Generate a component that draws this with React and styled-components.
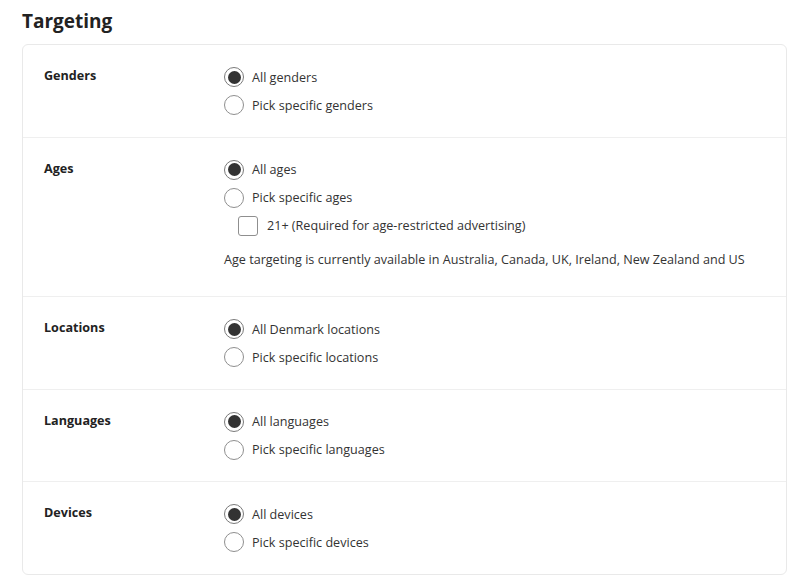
import React from "react"
import styled, { createGlobalStyle } from "styled-components"

const Global = createGlobalStyle`
body{
  margin:0;
  background:#fff;
  font-family:"Open Sans","Noto Sans",sans-serif;
  color:#333;
}
`

const sections = [
  { label: "Genders", options: ["All genders", "Pick specific genders"] },
  {
    label: "Ages",
    options: ["All ages", "Pick specific ages"],
    extra: true,
  },
  { label: "Locations", options: ["All Denmark locations", "Pick specific locations"] },
  { label: "Languages", options: ["All languages", "Pick specific languages"] },
  { label: "Devices", options: ["All devices", "Pick specific devices"] },
]

const App = () => {
  return (
    <Page>
      <Global />
      <Title>Targeting</Title>
      <Card>
        {sections.map((s) => (
          <Section key={s.label}>
            <Label>{s.label}</Label>
            <Options>
              {s.options.map((o, i) => (
                <Option key={o}>
                  <Radio checked={i === 0} />
                  <span>{o}</span>
                </Option>
              ))}
              {s.extra && (
                <>
                  <CheckRow>
                    <Box />
                    <span>21+ (Required for age-restricted advertising)</span>
                  </CheckRow>
                  <Note>
                    Age targeting is currently available in Australia, Canada, UK, Ireland, New
                    Zealand and US
                  </Note>
                </>
              )}
            </Options>
          </Section>
        ))}
      </Card>
    </Page>
  )
}
export default App

const Page = styled.div`
padding:8px 13px 6px 22px;
`
const Title = styled.h1`
margin:0 0 9px 0;
font-size:19px;
line-height:27px;
font-weight:700;
color:#222;
`
const Card = styled.div`
border:1px solid #e9e9e9;
border-radius:6px;
`
const Section = styled.div`
display:flex;
padding:18px 0 17.5px 21px;
border-top:1px solid #efefef;
&:first-child{
  border-top:none;
}
`
const Label = styled.div`
width:180px;
font-size:12.6px;
font-weight:700;
color:#222;
line-height:28px;
margin-top:-1px;
`
const Options = styled.div`
display:flex;
flex-direction:column;
`
const Option = styled.label`
display:flex;
align-items:center;
height:28px;
font-size:12.6px;
color:#333;
gap:8px;
`
const Radio = styled.span`
width:20px;
height:20px;
box-sizing:border-box;
border-radius:50%;
border:1px solid ${(p) => (p.checked ? "#7a7a7a" : "#8f8f8f")};
display:flex;
align-items:center;
justify-content:center;
&::after{
  content:"";
  display:${(p) => (p.checked ? "block" : "none")};
  width:13px;
  height:13px;
  border-radius:50%;
  background:#333;
}
`
const CheckRow = styled.label`
display:flex;
align-items:center;
height:28px;
margin-left:14px;
gap:9px;
font-size:12.6px;
color:#333;
`
const Box = styled.span`
width:20px;
height:20px;
box-sizing:border-box;
border:1px solid #8f8f8f;
border-radius:3px;
`
const Note = styled.div`
margin:6px 0 5px 0;
font-size:12.6px;
line-height:28px;
color:#333;
`
